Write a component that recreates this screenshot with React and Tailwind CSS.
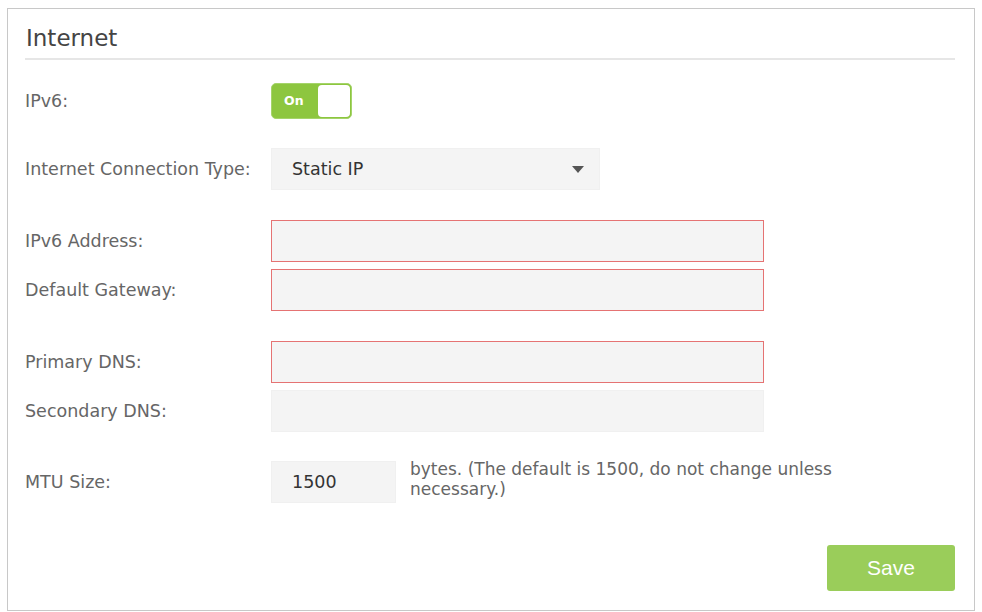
import React, { useState } from "react";

const font = { fontFamily: "'DejaVu Sans', Verdana, sans-serif" };

function Field({ label, children, className = "" }) {
  return (
    <div className={`flex items-center ${className}`}>
      <div className="w-[246px] shrink-0 text-[17.5px] text-[#666]">{label}</div>
      {children}
    </div>
  );
}

function TextBox({ error, className = "w-[493px]", value = "" }) {
  return (
    <input
      type="text"
      defaultValue={value}
      className={`h-[42px] bg-[#f4f4f4] px-5 text-[17.5px] text-[#333] outline-none ${
        error ? "border border-[#e57373]" : "border border-[#f0f0f0]"
      } ${className}`}
    />
  );
}

export default function App() {
  const [on, setOn] = useState(true);

  return (
    <div className="w-[982px] h-[612px] bg-white pl-[7px] pt-[8px]" style={font}>
      <div className="w-[968px] h-[603px] border border-[#c8c8c8] pl-[17px] pr-[19px]">
        {/* header */}
        <div className="h-[51px] border-b-2 border-[#e6e6e6] flex items-end pb-[8px]">
          <h1 className="text-[23px] text-[#444] leading-none pl-[1px]">Internet</h1>
        </div>

        <Field label="IPv6:" className="mt-[23px]">
          <button
            onClick={() => setOn(!on)}
            className="w-[81px] h-[36px] rounded-[5px] bg-[#8dc63f] border border-[#a5d46a] flex items-center p-[1px]"
          >
            <span className="flex-1 text-left pl-[11px] text-[12.5px] font-bold text-white">
              {on ? "On" : "Off"}
            </span>
            <span className="w-[32px] h-full bg-white rounded-[4px]" />
          </button>
        </Field>

        <Field label="Internet Connection Type:" className="mt-[29px]">
          <div className="w-[329px] h-[42px] bg-[#f4f4f4] border border-[#f0f0f0] flex items-center justify-between pl-[20px] pr-[15px]">
            <span className="text-[17.5px] text-[#333]">Static IP</span>
            <svg width="12" height="8" viewBox="0 0 12 8">
              <path d="M0 1h12L6 8z" fill="#555" />
            </svg>
          </div>
        </Field>

        <Field label="IPv6 Address:" className="mt-[30px]">
          <TextBox error />
        </Field>
        <Field label="Default Gateway:" className="mt-[7px]">
          <TextBox error />
        </Field>

        <Field label="Primary DNS:" className="mt-[30px]">
          <TextBox error />
        </Field>
        <Field label="Secondary DNS:" className="mt-[7px]">
          <TextBox />
        </Field>

        <Field label="MTU Size:" className="mt-[29px]">
          <TextBox className="w-[125px]" value="1500" />
          <p className="ml-[14px] w-[430px] text-[17px] leading-[20px] text-[#666] -mt-[6px]">
            bytes. (The default is 1500, do not change unless necessary.)
          </p>
        </Field>

        <div className="flex justify-end mt-[42px]">
          <button
            className="w-[128px] h-[46px] rounded-[3px] bg-[#9acd5a] text-white text-[21px]"
            style={{ fontFamily: "'Liberation Sans', Arial, sans-serif" }}
          >
            Save
          </button>
        </div>
      </div>
    </div>
  );
}
